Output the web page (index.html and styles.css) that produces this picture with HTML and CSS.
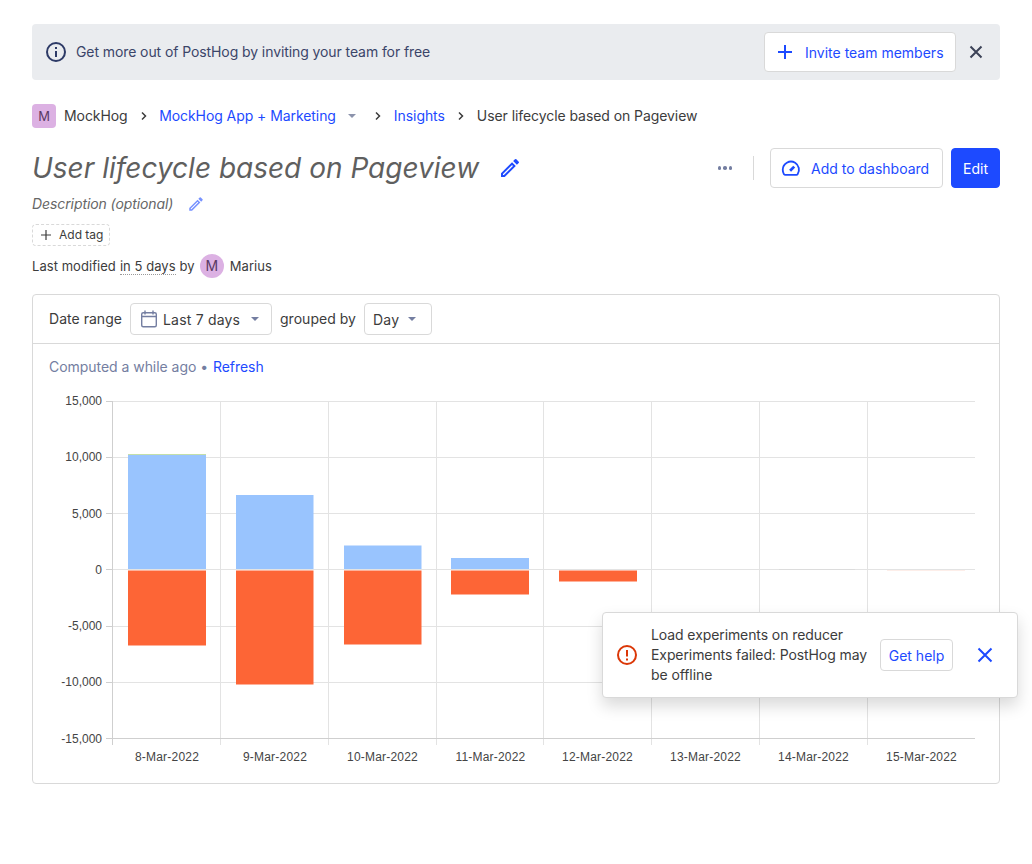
FILE: index.html
```html
<!DOCTYPE html>
<html lang="en">
<head>
  <meta charset="UTF-8">
  <title>User lifecycle based on Pageview</title>
  <link rel="stylesheet" href="styles.css">
</head>
<body>
  <div class="banner">
    <svg class="banner-icon" width="24" height="24" viewBox="0 0 24 24" fill="none" stroke="#2d3a66" stroke-width="2"><circle cx="12" cy="12" r="9"/><path d="M12 11v6"/><path d="M12 7v2"/></svg>
    <span class="banner-text">Get more out of PostHog by inviting your team for free</span>
    <button class="btn invite">
      <svg width="24" height="24" viewBox="0 0 24 24" fill="none" stroke="#1d4aff" stroke-width="2"><path d="M12 5v14M5 12h14"/></svg>
      <span class="btn-label">Invite team members</span>
    </button>
    <svg class="banner-close" width="24" height="24" viewBox="0 0 24 24" fill="none" stroke="#3c4257" stroke-width="2"><path d="M6.5 6.5l11 11M17.5 6.5l-11 11"/></svg>
  </div>

  <nav class="crumbs">
    <span class="org-badge">M</span>
    <span class="crumb first">MockHog</span>
    <svg class="chev chev-first" width="16" height="16" viewBox="0 0 16 16" fill="none" stroke="#3c3c3c" stroke-width="1.5"><path d="M6 4.5L9.5 8 6 11.5"/></svg>
    <a class="crumb link">MockHog App + Marketing</a>
    <span class="caret crumb-caret"></span>
    <svg class="chev" width="16" height="16" viewBox="0 0 16 16" fill="none" stroke="#3c3c3c" stroke-width="1.5"><path d="M6 4.5L9.5 8 6 11.5"/></svg>
    <a class="crumb link">Insights</a>
    <svg class="chev" width="16" height="16" viewBox="0 0 16 16" fill="none" stroke="#3c3c3c" stroke-width="1.5"><path d="M6 4.5L9.5 8 6 11.5"/></svg>
    <span class="crumb">User lifecycle based on Pageview</span>
  </nav>

  <div class="title-row">
    <h1>User lifecycle based on Pageview</h1>
    <svg class="title-edit" width="24" height="24" viewBox="0 0 24 24" fill="#1d4aff"><path d="M3 17.25V21h3.75L17.81 9.94l-3.75-3.75L3 17.25zM5.9 19H5v-.9l9.06-9.06.9.9L5.9 19zM20.71 7.04a1 1 0 0 0 0-1.41l-2.34-2.34a1 1 0 0 0-1.41 0l-1.83 1.83 3.75 3.75 1.83-1.83z"/></svg>
    <div class="title-actions">
      <span class="dots"><i></i><i></i><i></i></span>
      <span class="divider"></span>
      <button class="btn dash">
        <svg width="22" height="22" viewBox="0 0 24 24" fill="none" stroke="#1d4aff" stroke-width="2"><path d="M6 19.5h12a1.5 1.5 0 0 0 1.2-.7A9 9 0 0 0 16.5 6.2 9 9 0 0 0 3 14c0 1.7.4 3.3 1.3 4.7.3.5.9.8 1.7.8z"/><path d="M11 15l4.5-4.5" stroke-width="3"/></svg>
        <span class="btn-label">Add to dashboard</span>
      </button>
      <button class="btn primary"><span class="btn-label">Edit</span></button>
    </div>
  </div>

  <div class="desc-row">
    <span class="desc">Description (optional)</span>
    <svg width="18" height="18" viewBox="0 0 24 24" fill="#1d4aff" opacity="0.6"><path d="M3 17.25V21h3.75L17.81 9.94l-3.75-3.75L3 17.25zM5.9 19H5v-.9l9.06-9.06.9.9L5.9 19zM20.71 7.04a1 1 0 0 0 0-1.41l-2.34-2.34a1 1 0 0 0-1.41 0l-1.83 1.83 3.75 3.75 1.83-1.83z"/></svg>
  </div>

  <div class="tag">
    <svg width="14" height="14" viewBox="0 0 14 14" fill="none" stroke="#3c3c3c" stroke-width="1.2"><path d="M7 2v10M2 7h10"/></svg>
    Add tag
  </div>

  <div class="modified">
    <span class="meta">Last modified</span>
    <span class="meta dotted">in 5 days</span>
    <span class="meta">by</span>
    <span class="avatar">M</span>
    <span class="meta">Marius</span>
  </div>

  <section class="card">
    <div class="filters">
      <span class="filter-label">Date range</span>
      <div class="select range">
        <svg width="20" height="20" viewBox="0 0 20 20" fill="none" stroke="#747ea1" stroke-width="1.4"><rect x="2.7" y="3.7" width="14.6" height="14" rx="1.5"/><path d="M2.7 7.5h14.6M6 1.5v4M14 1.5v4"/></svg>
        <span class="select-value">Last 7 days</span>
        <span class="caret"></span>
      </div>
      <span class="filter-label">grouped by</span>
      <div class="select group">
        <span class="select-value">Day</span>
        <span class="caret"></span>
      </div>
    </div>

    <div class="computed">Computed a while ago <span class="bullet">•</span> <a class="link">Refresh</a></div>

    <svg class="chart" width="966" height="390" viewBox="33 390 966 390">
      <g class="grid">
        <path d="M113 401.5H975M113 457.5H975M113 513.5H975M113 569.5H975M113 626.5H975M113 682.5H975"/>
        <path d="M220.5 401V745M328.5 401V745M436.5 401V745M543.5 401V745M651.5 401V745M759.5 401V745M867.5 401V745"/>
      </g>
      <g class="axis">
        <path d="M112.5 401V745M106 738.5H975"/>
        <path d="M106 401.5H113M106 457.5H113M106 513.5H113M106 569.5H113M106 626.5H113M106 682.5H113"/>
      </g>
      <g class="bars-green">
        <rect x="128" y="454" width="78" height="2"/>
      </g>
      <g class="bars-blue">
        <rect x="128" y="455" width="78" height="114"/>
        <rect x="236" y="495" width="77.5" height="74"/>
        <rect x="344" y="545.5" width="77.5" height="23.5"/>
        <rect x="451" y="558" width="78" height="11"/>
      </g>
      <g class="bars-red">
        <rect x="128" y="570.5" width="78" height="75"/>
        <rect x="236" y="570.5" width="77.5" height="114"/>
        <rect x="344" y="570.5" width="77.5" height="74"/>
        <rect x="451" y="570.5" width="78" height="24"/>
        <rect x="559" y="570.5" width="78" height="11"/>
      </g>
      <rect class="trace-grey" x="779" y="569" width="76" height="1"/>
      <rect class="trace-pink" x="887" y="570" width="78" height="1"/>
      <g class="ticks-y">
        <text x="102" y="405">15,000</text>
        <text x="102" y="461">10,000</text>
        <text x="102" y="518">5,000</text>
        <text x="102" y="574">0</text>
        <text x="102" y="630">-5,000</text>
        <text x="102" y="686">-10,000</text>
        <text x="102" y="743">-15,000</text>
      </g>
      <g class="ticks-x">
        <text x="167" y="761">8-Mar-2022</text>
        <text x="275" y="761">9-Mar-2022</text>
        <text x="382.5" y="761">10-Mar-2022</text>
        <text x="490.5" y="761">11-Mar-2022</text>
        <text x="597.5" y="761">12-Mar-2022</text>
        <text x="705.5" y="761">13-Mar-2022</text>
        <text x="813.5" y="761">14-Mar-2022</text>
        <text x="921.5" y="761">15-Mar-2022</text>
      </g>
    </svg>
  </section>

  <div class="toast">
    <svg width="24" height="24" viewBox="0 0 24 24" fill="none" stroke="#db3707" stroke-width="2"><circle cx="12" cy="12" r="9"/><path d="M12 7v6.5M12 15.5v2"/></svg>
    <div class="toast-text">Load experiments on reducer<br>Experiments failed: PostHog may be offline</div>
    <button class="btn help"><span class="btn-label">Get help</span></button>
    <svg class="toast-close" width="24" height="24" viewBox="0 0 24 24" fill="none" stroke="#1d4aff" stroke-width="2"><path d="M5.5 5.5l13 13M18.5 5.5l-13 13"/></svg>
  </div>
</body>
</html>
```

FILE: styles.css
```css
* {
  box-sizing: border-box;
}
body {
  margin: 0;
  padding: 24px 32px 0;
  background: #fff;
  color: #3c3c3c;
  font-family: Inter, "Liberation Sans", sans-serif;
  font-size: 14px;
  line-height: 20px;
  position: relative;
  min-height: 864px;
}
.link {
  color: #1d4aff;
}
.btn {
  display: flex;
  align-items: center;
  background: #fff;
  border: 1px solid #d9d9d9;
  border-radius: 4px;
  color: #1d4aff;
  font: inherit;
  padding: 0;
}
.btn-label {
  padding-top: 2px;
}
.caret {
  display: inline-block;
  width: 0;
  height: 0;
  border-left: 4.5px solid transparent;
  border-right: 4.5px solid transparent;
  border-top: 4.5px solid #747ea1;
}

.banner {
  display: flex;
  align-items: center;
  height: 56px;
  background: #eaecef;
  border-radius: 4px;
  padding: 0 12px;
  color: #3b4569;
}
.banner-text {
  margin-left: 8px;
  flex: 1;
  letter-spacing: -0.09px;
}
.invite {
  width: 192px;
  height: 40px;
  padding-left: 8px;
  gap: 8px;
}
.banner-close {
  margin-left: 8px;
}

.crumbs {
  display: flex;
  align-items: center;
  height: 24px;
  margin-top: 24px;
  letter-spacing: -0.07px;
}
.org-badge {
  width: 24px;
  height: 24px;
  border-radius: 4px;
  background: #dcb1e3;
  color: #5a3a63;
  font-size: 13px;
  display: flex;
  align-items: center;
  justify-content: center;
  margin-right: 8px;
}
.chev {
  margin: 0 8px;
}
.chev-first {
  margin-right: 7.5px;
}
.crumb-caret {
  margin: 0 5.5px 0 12.5px;
  border-top-color: #8c93ac;
}

.title-row {
  display: flex;
  align-items: center;
  height: 40px;
  margin-top: 20px;
}
h1 {
  margin: 0;
  font-size: 28px;
  line-height: 40px;
  font-weight: 400;
  font-style: italic;
  color: #5f5f5f;
}
.title-edit {
  margin-left: 19px;
}
.title-actions {
  display: flex;
  align-items: center;
  margin-left: auto;
}
.dots {
  display: flex;
  gap: 2px;
  margin-right: 21px;
}
.dots i {
  width: 3.5px;
  height: 3.5px;
  border-radius: 50%;
  background: #747ea1;
}
.divider {
  width: 1px;
  height: 24px;
  background: #d9d9d9;
  margin-right: 16px;
}
.dash {
  width: 173px;
  height: 40px;
  padding-left: 9px;
  gap: 9px;
}
.primary {
  width: 49px;
  height: 40px;
  justify-content: center;
  margin-left: 8px;
  background: #1d4aff;
  border-color: #1d4aff;
  color: #fff;
}

.desc-row {
  display: flex;
  align-items: center;
  height: 24px;
  margin-top: 4px;
}
.desc {
  font-style: italic;
  color: #666;
  margin-right: 14px;
  letter-spacing: -0.09px;
}

.tag {
  display: flex;
  align-items: center;
  gap: 6px;
  height: 22px;
  width: 78px;
  margin-top: 8px;
  padding-left: 6px;
  border: 1px dashed #d9d9d9;
  border-radius: 4px;
  font-size: 12px;
}

.modified {
  display: flex;
  align-items: center;
  gap: 4px;
  height: 24px;
  margin-top: 8px;
  font-size: 13px;
  letter-spacing: 0.05px;
}
.dotted {
  border-bottom: 1px dotted #999;
  line-height: 16px;
  margin-top: 1px;
}
.avatar {
  width: 24px;
  height: 24px;
  border-radius: 50%;
  background: #dcb1e3;
  color: #5a3a63;
  font-size: 14px;
  display: flex;
  align-items: center;
  justify-content: center;
  margin: 0 2px 0 1px;
}

.card {
  margin-top: 16px;
  height: 490px;
  border: 1px solid #d9d9d9;
  border-radius: 4px;
}
.filters {
  display: flex;
  align-items: center;
  gap: 8px;
  height: 49px;
  padding: 0 16px;
  border-bottom: 1px solid #d9d9d9;
}
.filter-label {
  letter-spacing: 0.03px;
}
.select {
  display: flex;
  align-items: center;
  height: 32px;
  border: 1px solid #d9d9d9;
  border-radius: 4px;
  padding: 0 8px;
}
.select-value {
  padding-top: 2px;
  letter-spacing: 0.2px;
}
.range {
  width: 142px;
  gap: 4px;
}
.range .caret {
  margin-left: 7px;
}
.group {
  width: 68px;
}
.group .caret {
  margin-left: 9px;
}
.computed {
  height: 46px;
  padding: 13px 16px 0;
  color: #747ea1;
  letter-spacing: -0.04px;
}
.bullet {
  margin-right: 1px;
}
.chart {
  display: block;
}
.chart text {
  font-family: "Liberation Sans", Arial, sans-serif;
  font-size: 12px;
  fill: #444;
}
.grid path {
  stroke: #e3e3e3;
  fill: none;
}
.axis path {
  stroke: #cfcfcf;
  fill: none;
}
.bars-green rect {
  fill: #c4dfa8;
}
.bars-blue rect {
  fill: #99c4fe;
}
.bars-red rect {
  fill: #fd6536;
}
.trace-grey {
  fill: #dcdcdc;
}
.trace-pink {
  fill: #fdeee9;
}
.ticks-y text {
  text-anchor: end;
}
.ticks-x text {
  text-anchor: middle;
  letter-spacing: 0.2px;
}

.toast {
  position: absolute;
  left: 602px;
  top: 612px;
  width: 416px;
  height: 86px;
  display: flex;
  align-items: center;
  background: #fff;
  border: 1px solid #d9d9d9;
  border-radius: 4px;
  box-shadow: 0 8px 16px rgba(0, 0, 0, 0.15);
  padding: 0 20px 0 12px;
}
.toast-text {
  width: 221px;
  margin-left: 12px;
  letter-spacing: -0.09px;
}
.help {
  width: 73px;
  height: 32px;
  justify-content: center;
  margin-left: 8px;
}
.toast-close {
  margin-left: 20px;
}
```
